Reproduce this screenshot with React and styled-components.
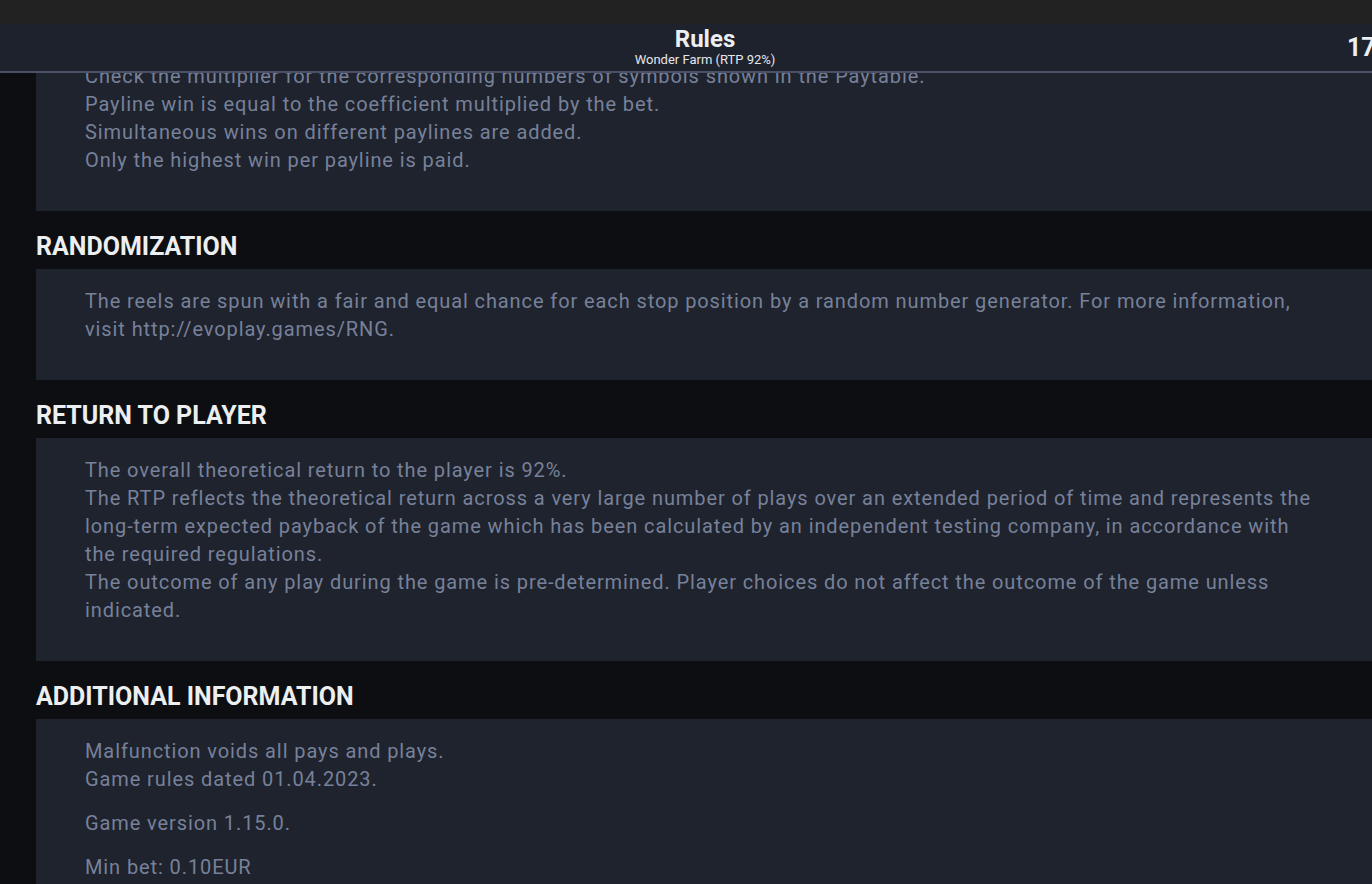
import styled, { createGlobalStyle } from 'styled-components'

const sections = [
  {
    id: 'paylines',
    paragraphs: [
      [
        'Check the multiplier for the corresponding numbers of symbols shown in the Paytable.',
        'Payline win is equal to the coefficient multiplied by the bet.',
        'Simultaneous wins on different paylines are added.',
        'Only the highest win per payline is paid.',
      ],
    ],
  },
  {
    id: 'rng',
    title: 'Randomization',
    paragraphs: [
      [
        'The reels are spun with a fair and equal chance for each stop position by a random number generator. For more information, visit http://evoplay.games/RNG.',
      ],
    ],
  },
  {
    id: 'rtp',
    title: 'Return to player',
    paragraphs: [
      [
        'The overall theoretical return to the player is 92%.',
        'The RTP reflects the theoretical return across a very large number of plays over an extended period of time and represents the long-term expected payback of the game which has been calculated by an independent testing company, in accordance with the required regulations.',
        'The outcome of any play during the game is pre-determined. Player choices do not affect the outcome of the game unless indicated.',
      ],
    ],
  },
  {
    id: 'info',
    title: 'Additional information',
    paragraphs: [
      ['Malfunction voids all pays and plays.', 'Game rules dated 01.04.2023.'],
      ['Game version 1.15.0.'],
      ['Min bet: 0.10EUR'],
      ['Max bet: 100.00EUR'],
    ],
  },
]

const App = () => {
  return (
    <>
      <GlobalStyle />
      <Page>
        <TopBar />
        <Header>
          <HeaderTitle>
            <Title>Rules</Title>
            <Subtitle>Wonder Farm (RTP 92%)</Subtitle>
          </HeaderTitle>
          <Clock>17:05</Clock>
        </Header>

        <Content>
          {sections.map(section => (
            <Section key={section.id}>
              {section.title && <SectionTitle>{section.title}</SectionTitle>}
              <Panel>
                {section.paragraphs.map((lines, i) => (
                  <Paragraph key={i}>
                    {lines.map(line => (
                      <Line key={line}>{line}</Line>
                    ))}
                  </Paragraph>
                ))}
              </Panel>
            </Section>
          ))}
        </Content>
      </Page>
    </>
  )
}

const GlobalStyle = createGlobalStyle`
  html, body {
    margin: 0;
    padding: 0;
    height: 100%;
    overflow: hidden;
    background: #0c0e12;
  }
  body {
    font-family: Roboto, 'Noto Sans', sans-serif;
  }
`

const Page = styled.div`
  display: flex;
  flex-direction: column;
  width: 1410px;
  height: 884px;
  overflow: hidden;
  background: #0c0e12;
`

const TopBar = styled.div`
  flex: 0 0 24px;
  background: #222222;
`

const Header = styled.header`
  position: relative;
  z-index: 2;
  flex: 0 0 auto;
  display: flex;
  align-items: center;
  justify-content: center;
  height: 47px;
  background: #1e222c;
  border-bottom: 2px solid #4a5166;
`

const HeaderTitle = styled.div`
  display: flex;
  flex-direction: column;
  align-items: center;
  padding-bottom: 3px;
`

const Title = styled.div`
  color: #eceef2;
  font-size: 24px;
  font-weight: 700;
  line-height: 26px;
`

const Subtitle = styled.div`
  color: #e4e6ea;
  font-size: 13px;
  line-height: 15px;
`

const Clock = styled.div`
  position: absolute;
  top: 10px;
  left: 1347px;
  color: #eceef2;
  font-size: 25px;
  font-weight: 700;
  line-height: 28px;
`

const Content = styled.main`
  display: flex;
  flex-direction: column;
  margin-top: -29px;
  padding: 0 36px;
`

const Section = styled.section`
  display: flex;
  flex-direction: column;
`

const SectionTitle = styled.h2`
  margin: 0;
  padding: 22px 0 8px;
  color: #eceef0;
  font-size: 25px;
  font-weight: 700;
  line-height: 28px;
  text-transform: uppercase;
`

const Panel = styled.div`
  display: flex;
  flex-direction: column;
  gap: 16px;
  padding: 18px 58px 37px 49px;
  background: #1f232d;
`

const Paragraph = styled.p`
  margin: 0;
`

const Line = styled.span`
  display: block;
  color: #77819a;
  font-size: 20px;
  line-height: 28px;
  letter-spacing: 0.9px;
`

export default App
